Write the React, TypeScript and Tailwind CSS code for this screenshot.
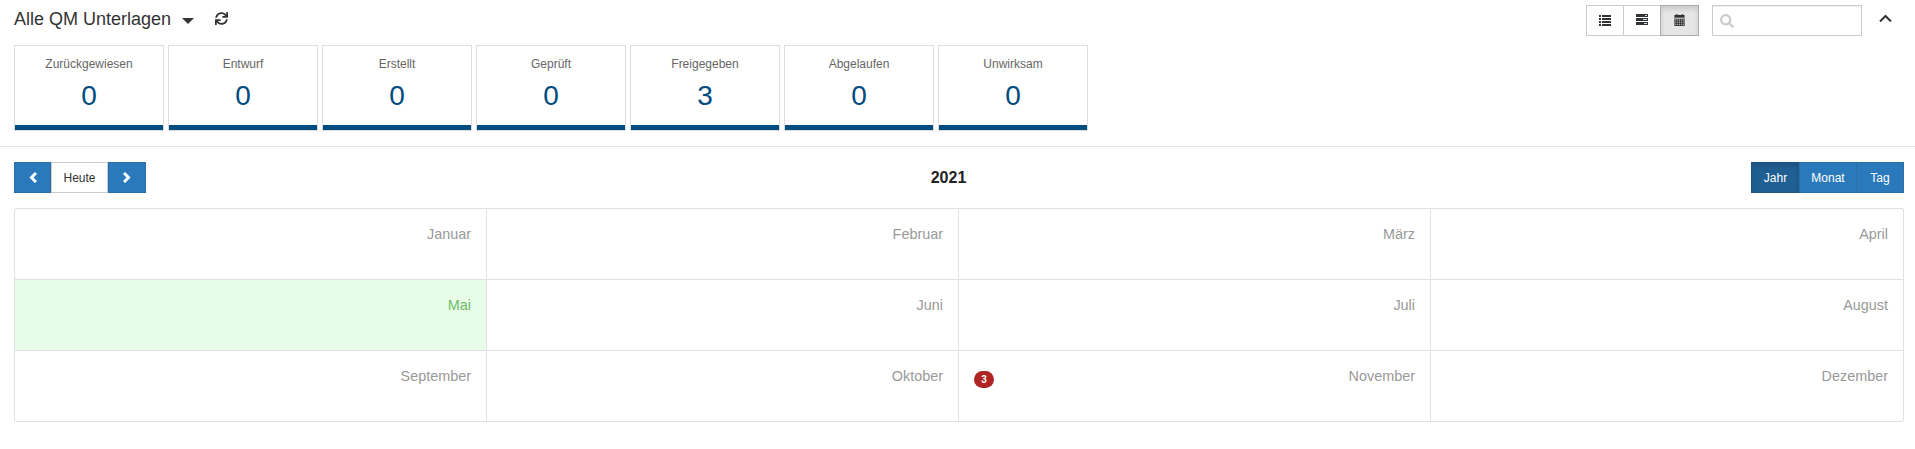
import { FaSync, FaSearch } from "react-icons/fa";

const stats = [
  ["Zurückgewiesen", "0"],
  ["Entwurf", "0"],
  ["Erstellt", "0"],
  ["Geprüft", "0"],
  ["Freigegeben", "3"],
  ["Abgelaufen", "0"],
  ["Unwirksam", "0"],
];

const months = ["Januar", "Februar", "März", "April", "Mai", "Juni", "Juli", "August", "September", "Oktober", "November", "Dezember"];

function ListIcon() {
  return (
    <svg width="12" height="11" viewBox="0 0 12 11" fill="#333" className="-mt-[1px]">
      <rect x="0" y="0" width="2" height="2" /><rect x="3" y="0" width="9" height="2" />
      <rect x="0" y="3" width="2" height="2" /><rect x="3" y="3" width="9" height="2" />
      <rect x="0" y="6" width="2" height="2" /><rect x="3" y="6" width="9" height="2" />
      <rect x="0" y="9" width="2" height="2" /><rect x="3" y="9" width="9" height="2" />
    </svg>
  );
}

function ServerIcon() {
  return (
    <svg width="12" height="11" viewBox="0 0 12 11" className="-mt-[3px]">
      <rect x="0" y="0" width="12" height="3" fill="#333" /><rect x="9" y="1" width="2" height="1" fill="#cde" />
      <rect x="0" y="4" width="12" height="3" fill="#333" /><rect x="7" y="5" width="4" height="1" fill="#cde" />
      <rect x="0" y="8" width="12" height="3" fill="#333" /><rect x="8" y="9" width="3" height="1" fill="#cde" />
    </svg>
  );
}

function CalendarIcon() {
  const cells = [];
  for (let r = 0; r < 4; r++) {
    for (let c = 0; c < 5; c++) {
      cells.push(<rect key={r + "-" + c} x={1 + c * 2} y={5 + r * 2} width="1" height="1" fill="#e6e6e6" />);
    }
  }
  return (
    <svg width="11" height="12" viewBox="0 0 11 13" className="-mt-[1px]">
      <rect x="0" y="1" width="11" height="12" fill="#333" />
      <rect x="2" y="0" width="1" height="2" fill="#333" />
      <rect x="8" y="0" width="1" height="2" fill="#333" />
      <rect x="0" y="4" width="11" height="1" fill="#e6e6e6" />
      {cells}
    </svg>
  );
}

function Chevron({ points, w, h, color, sw }: { points: string; w: number; h: number; color: string; sw: number }) {
  return (
    <svg width={w} height={h} viewBox={`0 0 ${w} ${h}`} fill="none" stroke={color} strokeWidth={sw} strokeLinecap="butt" strokeLinejoin="miter">
      <polyline points={points} />
    </svg>
  );
}

export default function App() {
  return (
    <div className="w-[1915px] h-[449px] bg-white overflow-hidden font-['Liberation_Sans',Arial,sans-serif] text-[#333]">
      <div className="pl-[14px] pr-[11px] h-[146px]">
        <div className="flex items-start h-[45px]">
          <span className="mt-[9px] text-[18px] leading-[20px] text-[#333]">Alle QM Unterlagen</span>
          <span className="ml-[11px] mt-[18px] w-0 h-0 border-x-[6px] border-x-transparent border-t-[6px] border-t-[#333]" />
          <FaSync className="ml-[21px] mt-[12px] w-[13px] h-[13px] text-[#333]" />
          <div className="ml-auto flex items-start mt-[5px]">
            <div className="flex h-[31px]">
              <div className="w-[38px] border border-[#ccc] flex items-center justify-center"><ListIcon /></div>
              <div className="w-[38px] -ml-px border border-[#ccc] flex items-center justify-center"><ServerIcon /></div>
              <div className="w-[39px] -ml-px border border-[#adadad] bg-[#e6e6e6] shadow-[inset_0_3px_5px_rgba(0,0,0,0.125)] flex items-center justify-center"><CalendarIcon /></div>
            </div>
            <div className="ml-[13px] w-[150px] h-[31px] border border-[#ccc] shadow-[inset_0_1px_1px_rgba(0,0,0,0.075)] flex items-center pl-[7px]">
              <FaSearch className="w-[14px] h-[14px] text-[#ccc]" />
            </div>
            <div className="ml-[17px] mr-[12px] mt-[9px] w-[13px] h-[8px]">
              <Chevron points="1,7.5 6.5,2 12,7.5" w={13} h={8} color="#333" sw={2} />
            </div>
          </div>
        </div>
        <div className="flex gap-[4px]">
          {stats.map(([label, value]) => (
            <div key={label} className="w-[150px] h-[86px] border border-[#ddd] flex flex-col items-center">
              <div className="mt-[10px] text-[12px] leading-[17px] text-[#666]">{label}</div>
              <div className="mt-[8px] text-[28px] leading-[30px] text-[#004b80]">{value}</div>
              <div className="mt-auto w-full h-[5px] bg-[#004b80] shrink-0" />
            </div>
          ))}
        </div>
      </div>
      <div className="h-px bg-[#e5e5e5]" />
      <div className="pl-[14px] pr-[11px] pt-[15px]">
        <div className="flex items-center justify-between h-[31px]">
          <div className="flex h-[31px] text-[12px]">
            <div className="w-[37px] bg-[#2a7abb] border border-[#2a6ea8] flex items-center justify-center">
              <Chevron points="7,1 2.5,5.5 7,10" w={8} h={11} color="#fff" sw={3} />
            </div>
            <div className="w-[57px] border border-[#ccc] flex items-center justify-center text-[#333]">Heute</div>
            <div className="w-[38px] bg-[#2a7abb] border border-[#2a6ea8] flex items-center justify-center">
              <Chevron points="1,1 5.5,5.5 1,10" w={8} h={11} color="#fff" sw={3} />
            </div>
          </div>
          <div className="text-[16px] font-bold text-[#222]">2021</div>
          <div className="flex h-[31px] text-[12px] text-white">
            <div className="w-[49px] bg-[#205f93] border border-[#1d5686] shadow-[inset_0_3px_5px_rgba(0,0,0,0.125)] flex items-center justify-center">Jahr</div>
            <div className="w-[58px] -ml-px bg-[#2a7abb] border border-[#2a6ea8] flex items-center justify-center">Monat</div>
            <div className="w-[48px] -ml-px bg-[#2a7abb] border border-[#2a6ea8] flex items-center justify-center">Tag</div>
          </div>
        </div>
        <div className="mt-[15px] grid grid-cols-4 border border-[#e1e1e1] rounded-[2px]">
          {months.map((m, i) => (
            <div
              key={m}
              className={
                "relative border-[#e1e1e1] " +
                (i < 8 ? "h-[71px] border-b " : "h-[70px] ") +
                (i % 4 !== 3 ? "border-r " : "") +
                (m === "Mai" ? "bg-[#e8fde7] " : "")
              }
            >
              <div className={"text-right pr-[15px] pt-[15px] text-[14.4px] leading-[20px] " + (m === "Mai" ? "text-[#6dbb6b]" : "text-[#999]")}>{m}</div>
              {m === "November" && (
                <span className="absolute left-[15px] top-[20px] w-[20px] h-[17px] rounded-full bg-[#b02323] text-white text-[10px] font-bold flex items-center justify-center">3</span>
              )}
            </div>
          ))}
        </div>
      </div>
    </div>
  );
}
